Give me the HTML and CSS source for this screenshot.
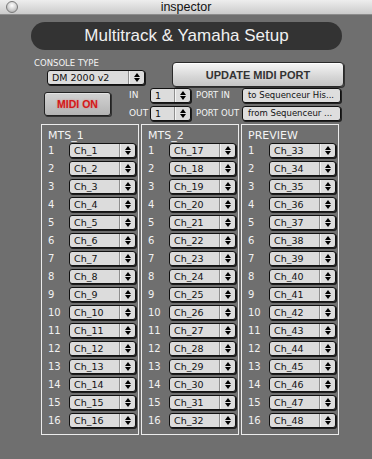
FILE: index.html
```html
<!DOCTYPE html>
<html>
<head>
<meta charset="utf-8">
<link rel="stylesheet" href="styles.css">
</head>
<body>
<div class="titlebar">
  <div class="tb-left"><span class="close"></span></div>
  <div class="tb-title">inspector</div>
  <div></div>
</div>
<div class="header">Multitrack &amp; Yamaha Setup</div>
<div class="row-a">
  <div class="console">
    <div class="small-label">CONSOLE TYPE</div>
    <div class="sel console-sel"><span class="sel-text">DM 2000 v2</span><span class="arr"></span></div>
  </div>
  <div class="update-btn">UPDATE MIDI PORT</div>
</div>
<div class="row-b">
  <div class="midi-btn">MIDI ON</div>
  <div class="ports">
    <div class="plabel">IN</div>
    <div class="sel"><span class="sel-text">1</span><span class="arr"></span></div>
    <div class="plabel port-l">PORT IN</div>
    <div class="psel">to Sequenceur His...</div>
    <div class="plabel">OUT</div>
    <div class="sel"><span class="sel-text">1</span><span class="arr"></span></div>
    <div class="plabel port-l">PORT OUT</div>
    <div class="psel">from Sequenceur ...</div>
  </div>
</div>
<div class="panels">
  <div class="panel">
    <div class="ptitle">MTS_1</div>
    <div class="rows">
      <span class="num">1</span><div class="sel"><span class="sel-text">Ch_1</span><span class="arr"></span></div>
      <span class="num">2</span><div class="sel"><span class="sel-text">Ch_2</span><span class="arr"></span></div>
      <span class="num">3</span><div class="sel"><span class="sel-text">Ch_3</span><span class="arr"></span></div>
      <span class="num">4</span><div class="sel"><span class="sel-text">Ch_4</span><span class="arr"></span></div>
      <span class="num">5</span><div class="sel"><span class="sel-text">Ch_5</span><span class="arr"></span></div>
      <span class="num">6</span><div class="sel"><span class="sel-text">Ch_6</span><span class="arr"></span></div>
      <span class="num">7</span><div class="sel"><span class="sel-text">Ch_7</span><span class="arr"></span></div>
      <span class="num">8</span><div class="sel"><span class="sel-text">Ch_8</span><span class="arr"></span></div>
      <span class="num">9</span><div class="sel"><span class="sel-text">Ch_9</span><span class="arr"></span></div>
      <span class="num">10</span><div class="sel"><span class="sel-text">Ch_10</span><span class="arr"></span></div>
      <span class="num">11</span><div class="sel"><span class="sel-text">Ch_11</span><span class="arr"></span></div>
      <span class="num">12</span><div class="sel"><span class="sel-text">Ch_12</span><span class="arr"></span></div>
      <span class="num">13</span><div class="sel"><span class="sel-text">Ch_13</span><span class="arr"></span></div>
      <span class="num">14</span><div class="sel"><span class="sel-text">Ch_14</span><span class="arr"></span></div>
      <span class="num">15</span><div class="sel"><span class="sel-text">Ch_15</span><span class="arr"></span></div>
      <span class="num">16</span><div class="sel"><span class="sel-text">Ch_16</span><span class="arr"></span></div>
    </div>
  </div>
  <div class="panel">
    <div class="ptitle">MTS_2</div>
    <div class="rows">
      <span class="num">1</span><div class="sel"><span class="sel-text">Ch_17</span><span class="arr"></span></div>
      <span class="num">2</span><div class="sel"><span class="sel-text">Ch_18</span><span class="arr"></span></div>
      <span class="num">3</span><div class="sel"><span class="sel-text">Ch_19</span><span class="arr"></span></div>
      <span class="num">4</span><div class="sel"><span class="sel-text">Ch_20</span><span class="arr"></span></div>
      <span class="num">5</span><div class="sel"><span class="sel-text">Ch_21</span><span class="arr"></span></div>
      <span class="num">6</span><div class="sel"><span class="sel-text">Ch_22</span><span class="arr"></span></div>
      <span class="num">7</span><div class="sel"><span class="sel-text">Ch_23</span><span class="arr"></span></div>
      <span class="num">8</span><div class="sel"><span class="sel-text">Ch_24</span><span class="arr"></span></div>
      <span class="num">9</span><div class="sel"><span class="sel-text">Ch_25</span><span class="arr"></span></div>
      <span class="num">10</span><div class="sel"><span class="sel-text">Ch_26</span><span class="arr"></span></div>
      <span class="num">11</span><div class="sel"><span class="sel-text">Ch_27</span><span class="arr"></span></div>
      <span class="num">12</span><div class="sel"><span class="sel-text">Ch_28</span><span class="arr"></span></div>
      <span class="num">13</span><div class="sel"><span class="sel-text">Ch_29</span><span class="arr"></span></div>
      <span class="num">14</span><div class="sel"><span class="sel-text">Ch_30</span><span class="arr"></span></div>
      <span class="num">15</span><div class="sel"><span class="sel-text">Ch_31</span><span class="arr"></span></div>
      <span class="num">16</span><div class="sel"><span class="sel-text">Ch_32</span><span class="arr"></span></div>
    </div>
  </div>
  <div class="panel">
    <div class="ptitle">PREVIEW</div>
    <div class="rows">
      <span class="num">1</span><div class="sel"><span class="sel-text">Ch_33</span><span class="arr"></span></div>
      <span class="num">2</span><div class="sel"><span class="sel-text">Ch_34</span><span class="arr"></span></div>
      <span class="num">3</span><div class="sel"><span class="sel-text">Ch_35</span><span class="arr"></span></div>
      <span class="num">4</span><div class="sel"><span class="sel-text">Ch_36</span><span class="arr"></span></div>
      <span class="num">5</span><div class="sel"><span class="sel-text">Ch_37</span><span class="arr"></span></div>
      <span class="num">6</span><div class="sel"><span class="sel-text">Ch_38</span><span class="arr"></span></div>
      <span class="num">7</span><div class="sel"><span class="sel-text">Ch_39</span><span class="arr"></span></div>
      <span class="num">8</span><div class="sel"><span class="sel-text">Ch_40</span><span class="arr"></span></div>
      <span class="num">9</span><div class="sel"><span class="sel-text">Ch_41</span><span class="arr"></span></div>
      <span class="num">10</span><div class="sel"><span class="sel-text">Ch_42</span><span class="arr"></span></div>
      <span class="num">11</span><div class="sel"><span class="sel-text">Ch_43</span><span class="arr"></span></div>
      <span class="num">12</span><div class="sel"><span class="sel-text">Ch_44</span><span class="arr"></span></div>
      <span class="num">13</span><div class="sel"><span class="sel-text">Ch_45</span><span class="arr"></span></div>
      <span class="num">14</span><div class="sel"><span class="sel-text">Ch_46</span><span class="arr"></span></div>
      <span class="num">15</span><div class="sel"><span class="sel-text">Ch_47</span><span class="arr"></span></div>
      <span class="num">16</span><div class="sel"><span class="sel-text">Ch_48</span><span class="arr"></span></div>
    </div>
  </div>
</div>
</body>
</html>
```
FILE: styles.css
```css
* { box-sizing: border-box; }
html, body { margin: 0; padding: 0; }
body {
  width: 372px;
  height: 459px;
  overflow: hidden;
  background: #6f6f6f;
  font-family: "DejaVu Sans", sans-serif;
  color: #f2f2f2;
}
.titlebar {
  height: 15px;
  display: grid;
  grid-template-columns: 1fr auto 1fr;
  align-items: center;
  background: linear-gradient(#eeeeee, #cbcbcb);
  border-bottom: 1px solid #8c8c8c;
}
.tb-left { display: flex; align-items: center; padding-left: 6px; }
.close {
  width: 12px; height: 12px;
  border-radius: 50%;
  border: 1px solid #7a7a7a;
  background: radial-gradient(circle at 50% 35%, #ffffff 0%, #d8d8d8 45%, #9e9e9e 100%);
}
.tb-title {
  font-family: "Liberation Sans", Arial, sans-serif;
  font-size: 12.5px;
  color: #111;
  line-height: 14px;
}
.header {
  margin: 7px 30px 0 31px;
  height: 28px;
  border-radius: 14px;
  background: #333333;
  display: flex;
  align-items: center;
  justify-content: center;
  font-family: "Liberation Sans", Arial, sans-serif;
  font-size: 17px;
  color: #f0f0f0;
}
.row-a {
  display: flex;
  align-items: flex-start;
  margin-top: 8px;
  padding-left: 34px;
}
.console { width: 111px; }
.small-label {
  font-size: 8.5px;
  line-height: 10px;
  color: #f4f4f4;
}
.console-sel { margin: 2px 0 0 13px; width: 98px; }
.update-btn {
  margin: 4px 0 0 27px;
  width: 172px;
  height: 25px;
  border: 1px solid #2a2a2a;
  border-radius: 4px;
  background: linear-gradient(#f6f6f6, #d6d6d6 60%, #c4c4c4);
  box-shadow: 1px 1px 0 #333, inset 0 1px 0 #fff;
  display: flex;
  align-items: center;
  justify-content: center;
  font-family: "Liberation Sans", Arial, sans-serif;
  font-weight: bold;
  font-size: 11px;
  color: #333;
}
.row-b {
  display: flex;
  align-items: flex-start;
  margin-top: 1px;
  padding-left: 44px;
}
.midi-btn {
  margin-top: 4px;
  width: 67px;
  height: 24px;
  border: 1px solid #222;
  border-radius: 3px;
  background: linear-gradient(#d2d2d2, #b4b4b4);
  box-shadow: 1px 1px 0 #333, inset 0 1px 0 #e4e4e4;
  display: flex;
  align-items: center;
  justify-content: center;
  font-family: "Liberation Sans", Arial, sans-serif;
  font-weight: bold;
  font-size: 10.5px;
  color: #d41818;
  text-shadow: 0 0 2px rgba(230, 60, 60, 0.5);
}
.ports {
  margin-left: 18px;
  display: grid;
  grid-template-columns: 21px 41px 51px 99px;
  grid-auto-rows: 15px;
  row-gap: 3px;
  align-items: center;
}
.plabel { font-size: 9px; line-height: 15px; color: #f4f4f4; }
.port-l { padding-left: 5px; font-size: 8.5px; white-space: nowrap; }
.psel {
  height: 15px;
  border: 1px solid #111;
  border-radius: 3px;
  background: #dedede;
  box-shadow: 1px 1px 0 #222;
  font-size: 8.5px;
  line-height: 13px;
  padding-left: 5px;
  color: #111;
  white-space: nowrap;
  overflow: hidden;
}
.sel {
  height: 15px;
  display: flex;
  border: 1px solid #111;
  border-radius: 3px;
  background: #dcdcdc;
  box-shadow: 1px 1px 0 #1c1c1c;
  color: #111;
}
.sel-text {
  flex: 1;
  font-size: 9.5px;
  line-height: 13px;
  padding-left: 4px;
  white-space: nowrap;
  overflow: hidden;
}
.arr {
  width: 16px;
  border-left: 1px solid #8e8e8e;
  box-shadow: inset 1px 0 0 #f4f4f4;
  display: flex;
  flex-direction: column;
  align-items: center;
  justify-content: center;
  gap: 1px;
}
.arr::before, .arr::after {
  content: "";
  width: 0; height: 0;
  border-left: 3.5px solid transparent;
  border-right: 3.5px solid transparent;
}
.arr::before { border-bottom: 4px solid #000; }
.arr::after { border-top: 4px solid #000; }
.panels {
  display: flex;
  gap: 2px;
  margin-top: 3px;
  padding-left: 41px;
}
.panel {
  width: 98px;
  border: 1px solid #ececec;
  padding: 4px 0 6px 6px;
}
.ptitle {
  font-size: 11px;
  line-height: 13px;
  margin-bottom: 1px;
  color: #f4f4f4;
}
.rows {
  display: grid;
  grid-template-columns: 21px 67px;
  grid-auto-rows: 15px;
  row-gap: 3px;
  align-items: center;
}
.num { font-size: 10px; line-height: 15px; color: #f2f2f2; }
```
